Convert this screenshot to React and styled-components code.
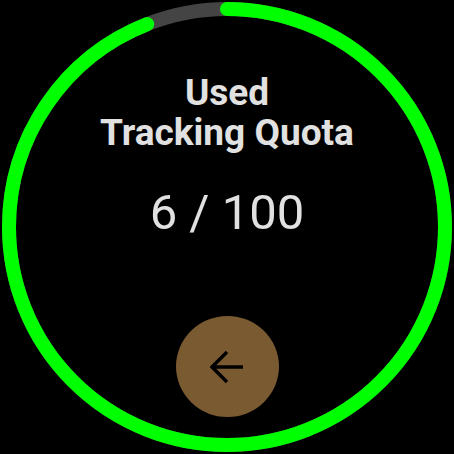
import React from "react";
import styled, { createGlobalStyle } from "styled-components";

const Global = createGlobalStyle`
  html, body { margin: 0; padding: 0; background: #000; }
  body { font-family: Roboto, "Noto Sans", sans-serif; }
`;

const Screen = styled.div`
  position: relative;
  width: 454px;
  height: 454px;
  background: #000;
  overflow: hidden;
  display: flex;
  flex-direction: column;
  align-items: center;
  box-sizing: border-box;
  padding: 73px 0 37px;
`;

const Ring = styled.svg`
  position: absolute;
  left: 0;
  top: 0;
  pointer-events: none;
`;

const Title = styled.h1`
  margin: 0;
  font-size: 37px;
  line-height: 40px;
  font-weight: 700;
  color: #e1e1e1;
  text-align: center;
  position: relative;
`;

const Count = styled.div`
  margin-top: 35px;
  font-size: 49px;
  line-height: 49px;
  font-weight: 400;
  color: #e1e1e1;
  position: relative;
`;

const BackButton = styled.button`
  margin-top: auto;
  width: 103px;
  height: 101px;
  border-radius: 50%;
  border: none;
  background: #795a31;
  display: flex;
  align-items: center;
  justify-content: center;
  padding: 0;
  position: relative;
  cursor: pointer;
`;

const R = 218;
const C = 2 * Math.PI * R;
const used = 6;
const total = 100;

export default function App() {
  const remain = (total - used) / total;
  return (
    <>
      <Global />
      <Screen>
        <Ring width="454" height="454" viewBox="0 0 454 454">
          <circle cx="227" cy="227" r={R} fill="none" stroke="#444444" strokeWidth="14" />
          <circle
            cx="227"
            cy="227"
            r={R}
            fill="none"
            stroke="#00ff00"
            strokeWidth="14"
            strokeLinecap="round"
            strokeDasharray={`${C * remain} ${C}`}
            transform="rotate(-90 227 227)"
          />
        </Ring>
        <Title>
          Used
          <br />
          Tracking Quota
        </Title>
        <Count>
          {used} / {total}
        </Count>
        <BackButton aria-label="Back">
          <svg width="34" height="34" viewBox="0 0 34 34">
            <path d="M2 17H33M17 2L2 17L17 32" fill="none" stroke="#000" strokeWidth="3.4" />
          </svg>
        </BackButton>
      </Screen>
    </>
  );
}
